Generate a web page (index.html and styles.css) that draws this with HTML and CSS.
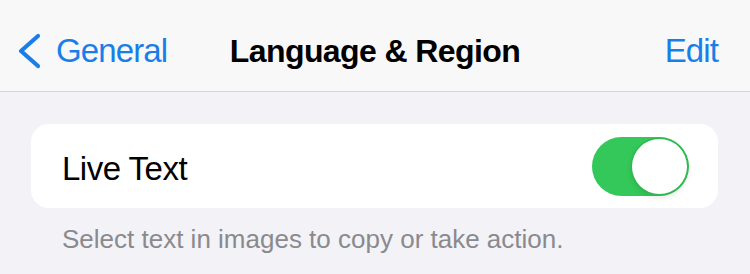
FILE: index.html
```html
<!DOCTYPE html>
<html lang="en">

<head>
    <meta charset="UTF-8">
    <meta name="viewport" content="width=device-width, initial-scale=1.0">
    <title>Language &amp; Region</title>
    <link rel="stylesheet" href="styles.css">
</head>

<body>

    <div class="nav-bar">
        <a class="nav-back" href="#">
            <svg class="chevron" width="24" height="36" viewBox="0 0 24 36">
                <polyline points="21,3 4,18 21,33" fill="none" stroke="#1a7ee9" stroke-width="4.2"
                    stroke-linecap="round" stroke-linejoin="round" />
            </svg>
            <span>General</span>
        </a>
        <h1 class="nav-title">Language &amp; Region</h1>
        <a class="nav-edit" href="#">Edit</a>
    </div>

    <div class="settings">
        <div class="group">
            <div class="row">
                <span class="row-label">Live Text</span>
                <div class="switch on">
                    <div class="knob"></div>
                </div>
            </div>
        </div>
        <p class="footer">Select text in images to copy or take action.</p>
    </div>

</body>

</html>
```

FILE: styles.css
```css
body {
    font-family: "Liberation Sans", Arial, sans-serif;
    background-color: #f2f2f7;
    color: #000;
    margin: 0;
    width: 750px;
    height: 274px;
    overflow: hidden;
}

/* Navigation bar */
.nav-bar {
    display: grid;
    grid-template-columns: 1fr auto 1fr;
    align-items: start;
    height: 92px;
    box-sizing: border-box;
    padding: 31px 32px 0 32px;
    background-color: #f8f8f9;
    border-bottom: 1px solid #d4d4d8;
}

.nav-back,
.nav-edit {
    color: #1a7ee9;
    text-decoration: none;
    font-size: 33px;
    line-height: 40px;
    letter-spacing: -0.9px;
}

.nav-back {
    display: flex;
    align-items: center;
    gap: 15px;
    justify-self: start;
    margin-left: -15px;
}

.chevron {
    display: block;
    margin-top: -1px;
}

.nav-edit {
    justify-self: end;
}

.nav-title {
    margin: 0;
    font-size: 32px;
    line-height: 40px;
    font-weight: bold;
    letter-spacing: -0.6px;
}

/* Settings group */
.settings {
    padding: 32px 32px 0 31px;
}

.group {
    background-color: #fff;
    border-radius: 18px;
}

.row {
    display: flex;
    align-items: center;
    justify-content: space-between;
    height: 84px;
    padding: 0 29px 0 31px;
}

.row-label {
    padding-top: 5px;
    font-size: 33px;
    letter-spacing: -0.5px;
}

.switch {
    position: relative;
    width: 97px;
    height: 59px;
    border-radius: 30px;
    background-color: #e9e9eb;
}

.switch.on {
    background-color: #34c759;
}

.knob {
    position: absolute;
    top: 2px;
    right: 2px;
    width: 55px;
    height: 55px;
    border-radius: 50%;
    background-color: #fff;
    box-shadow: 0 0 0 1.5px #2fb84f, 0 3px 6px rgba(0, 0, 0, 0.12);
}

.footer {
    margin: 15px 0 0 31px;
    font-size: 26px;
    line-height: 32px;
    color: #8a8a8e;
}
```
